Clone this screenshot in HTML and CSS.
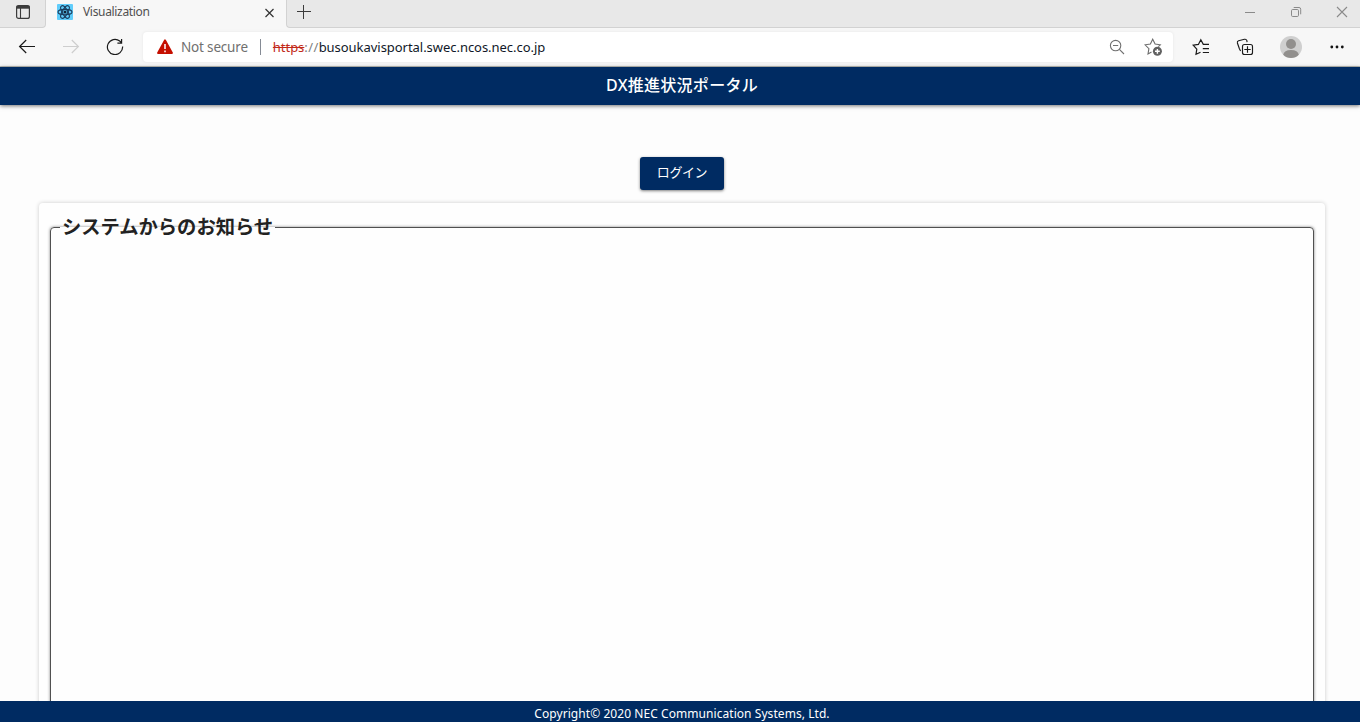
FILE: index.html
```html
<!DOCTYPE html>
<html lang="ja">
<head>
<meta charset="utf-8">
<title>Visualization</title>
<link rel="stylesheet" href="styles.css">
</head>
<body>
<div class="tabs">
  <div class="tab-menu">
    <svg width="16" height="16" viewBox="0 0 16 16" fill="none" stroke="#3b3b3b"><rect x="1.6" y="1.6" width="12.8" height="12.8" rx="2" stroke-width="1.2"/><path d="M1.5 3.2h13" stroke-width="3"/><path d="M5.5 4v10" stroke-width="1.1"/></svg>
  </div>
  <div class="tab">
    <svg width="16" height="16" viewBox="0 0 16 16"><rect width="16" height="16" rx="1" fill="#61cdfb"/><g fill="none" stroke="#1c3d5d" stroke-width="1.15"><ellipse cx="8" cy="8" rx="7" ry="2.7"/><ellipse cx="8" cy="8" rx="7" ry="2.7" transform="rotate(60 8 8)"/><ellipse cx="8" cy="8" rx="7" ry="2.7" transform="rotate(120 8 8)"/></g><circle cx="8" cy="8" r="1.5" fill="#102234"/></svg>
    <span class="tab-title">Visualization</span>
    <svg class="tab-close" width="10" height="10" viewBox="0 0 10 10" stroke="#333" stroke-width="1.2"><path d="M1.5 1l8 8M9.5 1l-8 8"/></svg>
  </div>
  <div class="tab-rest">
    <svg width="16" height="16" viewBox="0 0 16 16" stroke="#3b3b3b" stroke-width="1"><path d="M1 7.5h14M7.5 1v14"/></svg>
    <div class="window-controls">
      <svg width="12" height="12" viewBox="0 0 12 12" stroke="#8a8a8a"><path d="M1 6.5h10"/></svg>
      <svg width="12" height="12" viewBox="0 0 12 12" stroke="#8a8a8a" fill="none"><rect x="1.5" y="3.5" width="7" height="7" rx="1.2"/><path d="M3.7 1.5h5.3q1.7 0 1.7 1.7v5.1"/></svg>
      <svg width="12" height="12" viewBox="0 0 12 12" stroke="#8a8a8a" stroke-width="1.1"><path d="M1 1l10 10M11 1L1 11"/></svg>
    </div>
  </div>
</div>
<div class="toolbar">
  <div class="nav">
    <svg width="18" height="18" viewBox="0 0 18 18" fill="none" stroke="#1b1b1b" stroke-width="1.2"><path d="M17 9.5H1.6M8.2 3L1.6 9.5l6.6 6.5"/></svg>
    <svg width="18" height="18" viewBox="0 0 18 18" fill="none" stroke="#cecece" stroke-width="1.2"><path d="M1 9.5h15.4M9.8 3l6.6 6.5L9.8 16"/></svg>
    <svg width="18" height="18" viewBox="0 0 18 18" fill="none" stroke="#1b1b1b" stroke-width="1.2"><path d="M16.6 9.5A7.6 7.6 0 1 1 13.7 4L15.6 5.7M15.6 2V6.2H11.4"/></svg>
  </div>
  <div class="address">
    <svg width="16" height="16" viewBox="0 0 16 16"><path d="M8 1.2L15 14H1z" fill="#c50f00" stroke="#c50f00" stroke-width="1.8" stroke-linejoin="round"/><path d="M8 5v5M8 11.4v1.8" stroke="#fff" stroke-width="1.5"/></svg>
    <span class="security">Not secure</span>
    <span class="divider"></span>
    <span class="url"><s>https</s><i>://</i>busoukavisportal.swec.ncos.nec.co.jp</span>
    <svg class="zoom" width="16" height="16" viewBox="0 0 16 16" fill="none" stroke="#717171" stroke-width="1.1"><circle cx="6.6" cy="6.6" r="5.2"/><path d="M4 6.5h5.2M10.4 10.4l4.6 4.6"/></svg>
    <svg class="favorite" width="18" height="18" viewBox="0 0 18 18" fill="none" stroke="#6c6c6c" stroke-width="1.1"><path d="M7.5 14L4 16l.9-5.4L1 6.8l5.4-.8L8.7 1.2l2.4 4.8 5.2.8-2 1.9"/><circle cx="13.4" cy="13.3" r="4.5" fill="#616161" stroke="none"/><path d="M13.4 10.9v4.8M11 13.3h4.8" stroke="#fff" stroke-width="1.4"/></svg>
  </div>
  <div class="actions">
    <svg width="18" height="18" viewBox="0 0 18 18" fill="none" stroke="#1b1b1b" stroke-width="1.2"><path d="M8.5 14.2L4 16.3l.8-5.2L1.2 7.2l5.2-.8 2.4-4.7 2.5 4.7H17M10.8 10.6H17M10.8 14.5H17"/></svg>
    <svg width="18" height="18" viewBox="0 0 18 18" fill="none" stroke="#1b1b1b" stroke-width="1.15"><rect x="6.5" y="6.5" width="10" height="10" rx="2"/><path d="M11.5 8.3v6.4M8.3 11.5h6.4M4.6 13L3.4 10.8 1.4 5q-.4-1.7 1.2-2.2L8.5 1.3q1.7-.4 2.3 1.1l.3 1.7"/></svg>
    <svg width="22" height="22" viewBox="0 0 22 22"><circle cx="11" cy="11" r="11" fill="#cfcfcf"/><circle cx="11" cy="8" r="5" fill="#918f8d"/><path d="M3.2 18.7Q4 14 11 14t7.8 4.7A11 11 0 0 1 3.2 18.7z" fill="#918f8d"/></svg>
    <svg width="16" height="4" viewBox="0 0 16 4" fill="#111"><circle cx="2.8" cy="2" r="1.4"/><circle cx="8" cy="2" r="1.4"/><circle cx="13.3" cy="2" r="1.4"/></svg>
  </div>
</div>
<header class="app-header"><h1>DX推進状況ポータル</h1></header>
<main>
  <button class="login">ログイン</button>
  <section class="card">
    <fieldset><legend>システムからのお知らせ</legend></fieldset>
  </section>
</main>
<footer><span>Copyright© 2020 NEC Communication Systems, Ltd.</span></footer>
</body>
</html>
```
FILE: styles.css
```css
* { box-sizing: border-box; }
body { margin: 0; height: 722px; overflow: hidden; display: flex; flex-direction: column; background: #fdfdfd; font-family: "Noto Sans", "Noto Sans CJK JP", sans-serif; }
svg { display: block; flex: none; }
.tabs { display: flex; flex: none; height: 28px; background: #f7f7f7; }
.tab-menu { width: 46px; padding: 4px 0 0 15px; background: #e8e8e8; border-right: 1px solid #d2d2d2; border-bottom: 1px solid #d2d2d2; border-bottom-right-radius: 4px; }
.tab { display: flex; width: 240px; padding: 4px 12px 0 11px; }
.tab-title { margin-left: 10px; font-size: 12px; line-height: 16px; letter-spacing: -0.33px; color: #505050; }
.tab-close { margin: 4px 0 0 auto; }
.tab-rest { flex: 1; display: flex; justify-content: space-between; padding: 4px 12px 0 9px; background: #e8e8e8; border-left: 1px solid #d2d2d2; border-bottom: 1px solid #d2d2d2; border-bottom-left-radius: 4px; }
.window-controls { display: flex; gap: 34px; padding-top: 2px; }
.toolbar { display: flex; flex: none; height: 39px; background: #f7f7f7; border-bottom: 1px solid #bfc0b9; }
.nav { display: flex; gap: 26px; width: 143px; padding: 9px 0 0 18px; }
.address { display: flex; align-items: center; width: 1030px; height: 30px; margin-top: 4px; padding: 0 11px 0 14px; background: #fff; border-radius: 4px; box-shadow: 0 0 3px #e5e5e5; }
.security { margin-left: 8px; font-size: 13.5px; color: #707070; letter-spacing: -0.18px; white-space: nowrap; }
.divider { width: 1px; height: 16px; margin: 0 12px; background: #858b95; }
.url { font-size: 13px; color: #101828; letter-spacing: -0.04px; white-space: nowrap; }
.url s { color: #c22a18; }
.url i { color: #808080; font-style: normal; letter-spacing: 0.4px; }
.zoom { margin-left: auto; }
.favorite { margin-left: 19px; }
.actions { display: flex; align-items: center; flex: 1; height: 38px; padding-left: 19px; }
.actions svg + svg { margin-left: 26px; }
.actions svg:last-child { margin-left: 27px; }
.app-header { position: relative; flex: none; height: 38px; padding-left: 4px; background: #002b62; box-shadow: 0 1px 4px rgba(0,0,0,.55); text-align: center; }
h1 { margin: 0; color: #fff; font-size: 16px; font-weight: 500; line-height: 37px; letter-spacing: 0.28px; }
main { flex: 1; min-height: 0; overflow: hidden; padding: 52px 35px 0 39px; display: flex; flex-direction: column; }
.login { align-self: center; flex: none; width: 84px; height: 33px; padding: 0 0 5px; border: 0; border-radius: 3px; background: #002b62; box-shadow: 0 1px 3px rgba(0,0,0,.5); color: #fff; font: 400 13px "Noto Sans CJK JP", sans-serif; letter-spacing: -0.4px; }
.card { flex: none; height: 560px; margin-top: 13px; padding: 10px 11px 0; background: #fefefe; border-radius: 4px; box-shadow: 0 0 4px rgba(0,0,0,.2); }
fieldset { height: 550px; margin: 0; padding: 0 9px; border: 1px solid #505050; border-radius: 4px; box-shadow: 0 0 3px rgba(0,0,0,.5); }
legend { padding: 0 2px; color: #222; font-size: 19.3px; font-weight: 700; line-height: 28px; letter-spacing: 0; }
footer { flex: none; height: 21px; padding-left: 4px; background: #002b62; color: #fff; font-size: 12px; line-height: 25px; text-align: center; letter-spacing: 0.06px; }
```
